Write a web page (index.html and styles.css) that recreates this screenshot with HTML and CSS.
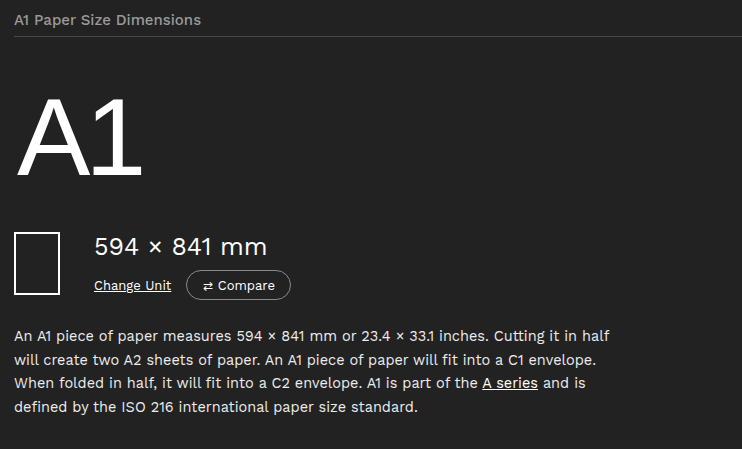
FILE: index.html
```html
<!DOCTYPE html>
<html lang="en">
<head>
	<meta http-equiv="Content-Type" content="text/html;charset=UTF-8">
	<link rel="stylesheet" href="styles.css">
</head>
<body>

<div class="size">
	<h1 class="size__title">A1 Paper Size Dimensions</h1>

	<div class="size__name">A1</div>

	<div class="size__info">
		<div class="size__sheet"></div>
		<div class="size__details">
			<div class="size__dims">594 × 841 mm</div>
			<div class="size__actions">
				<a class="size__unit" href="#">Change Unit</a>
				<button class="size__compare"><span class="size__compareIcon">⇄</span> Compare</button>
			</div>
		</div>
	</div>

	<p class="size__text">
		An A1 piece of paper measures 594 × 841 mm or 23.4 × 33.1 inches. Cutting it in half
		will create two A2 sheets of paper. An A1 piece of paper will fit into a C1 envelope.
		When folded in half, it will fit into a C2 envelope. A1 is part of the <a href="#">A series</a> and is
		defined by the ISO 216 international paper size standard.
	</p>
</div>

</body>
</html>
```

FILE: styles.css
```css
body {
	margin: 0;
	padding: 0;
	background: #222222;
	color: #ececec;
	font-family: "Work Sans", Inter, "Noto Sans", sans-serif;
}

.size {
	padding: 0 0 0 14px;
}

.size__title {
	margin: 0;
	padding: 11px 0 7px;
	border-bottom: 1px solid #4a4a4a;
	font-size: 15px;
	font-weight: 500;
	color: #9a9a9a;
}

.size__name {
	margin-top: 38px;
	margin-left: 3px;
	font-family: "Liberation Sans", Arial, sans-serif;
	font-size: 110px;
	line-height: 124px;
	letter-spacing: -5px;
	color: #ffffff;
}

.size__info {
	display: flex;
	margin-top: 33px;
}

.size__sheet {
	width: 42px;
	height: 59px;
	border: 2px solid #ffffff;
}

.size__details {
	margin-left: 34px;
}

.size__dims {
	font-size: 25px;
	line-height: 29px;
	color: #ffffff;
}

.size__actions {
	display: flex;
	align-items: center;
	margin-top: 9px;
}

.size__unit {
	font-size: 13px;
	color: #ffffff;
	margin-right: 15px;
}

.size__compare {
	height: 30px;
	padding: 0 15px 0 16px;
	border: 1px solid #8a8a8a;
	border-radius: 15px;
	background: transparent;
	color: #ffffff;
	font-family: inherit;
	font-size: 13px;
}

.size__compareIcon {
	font-size: 12px;
}

.size__text {
	margin: 25px 0 0;
	max-width: 600px;
	font-size: 14.5px;
	line-height: 23.5px;
	color: #ececec;
}

.size__text a {
	color: #ffffff;
}
```
